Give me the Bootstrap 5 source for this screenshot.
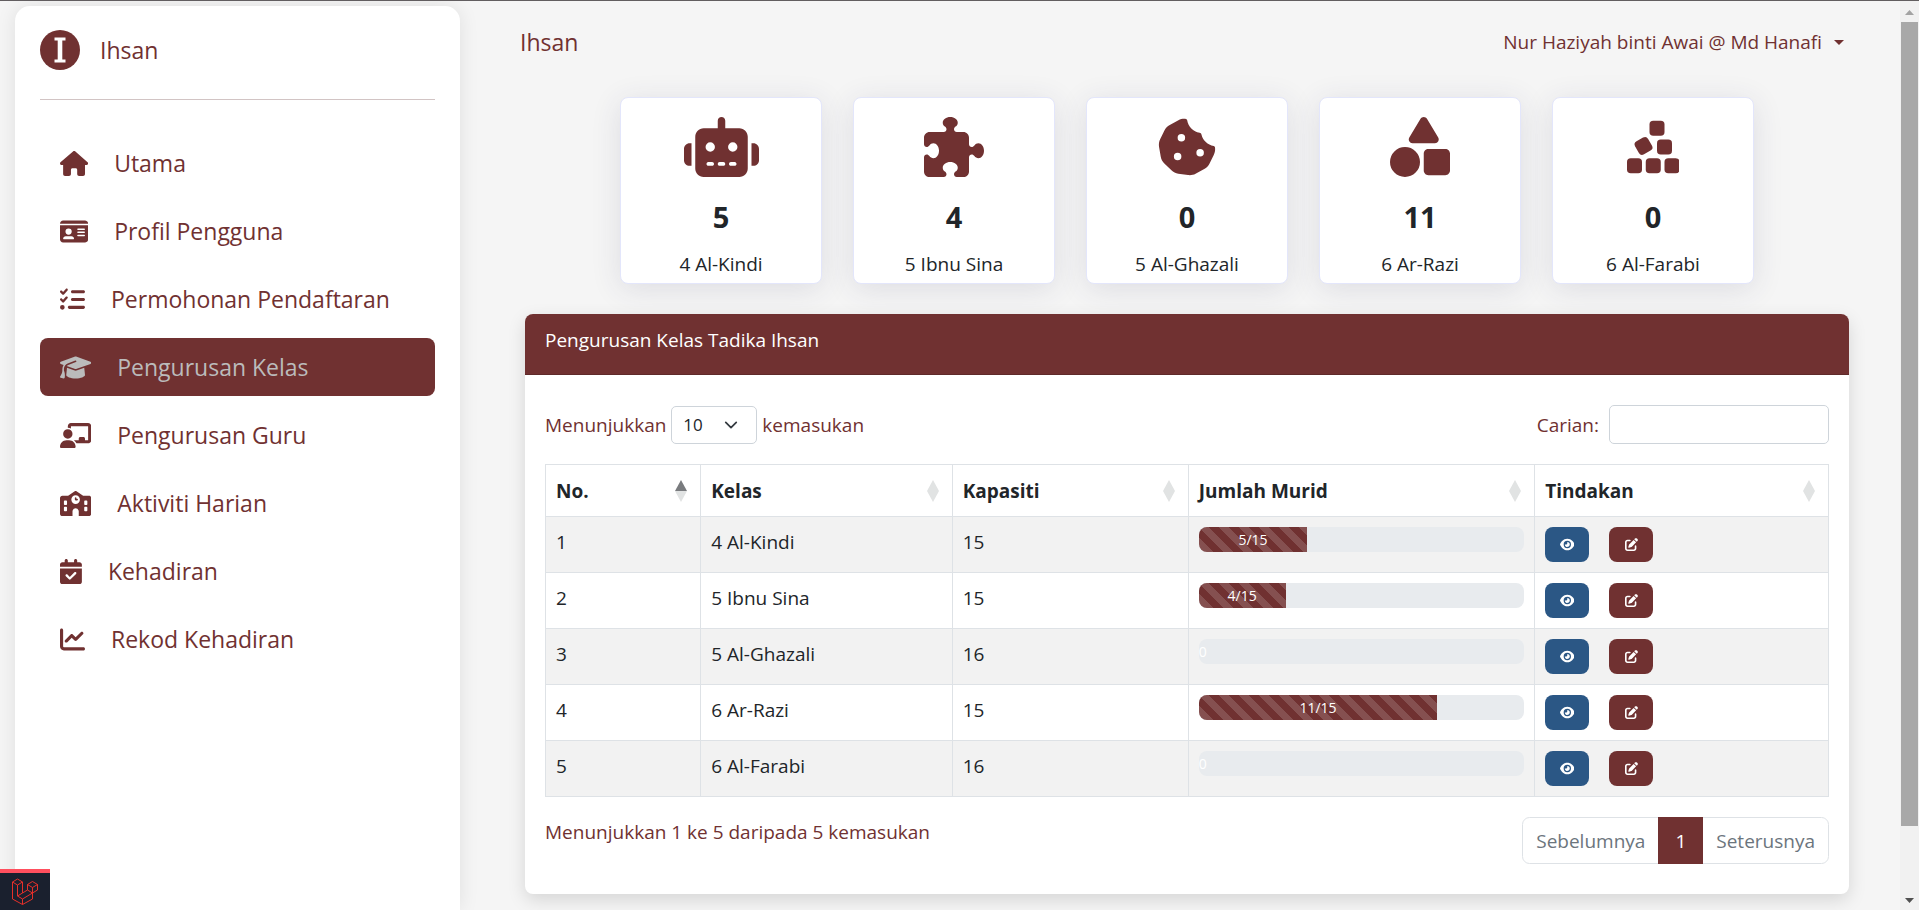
<!DOCTYPE html>
<html lang="ms">
<head>
<meta charset="utf-8">
<meta name="viewport" content="width=device-width, initial-scale=1">
<title>Pengurusan Kelas</title>
<link href="https://cdn.jsdelivr.net/npm/bootstrap@5.3.0/dist/css/bootstrap.min.css" rel="stylesheet">
<style>
:root { --brand: #703131; }
html { font-size: 20px; }
body { font-family: "Open Sans", "Noto Sans", sans-serif; font-size: 19px; line-height: 30px; background: #f5f5f5; color: #212529; border-top: 1px solid #625e60; height: 100vh; overflow: hidden; }
.ico { height: 1em; width: auto; fill: currentColor; display: block; flex: none; }
.text-brand, .text-brand:hover { color: var(--brand); }

/* sidebar */
.side { flex: 0 0 460px; padding: 5px 0 0 15px; }
.side-panel { background: #fff; border-radius: 15px 15px 0 0; padding: 24px 25px; box-shadow: 0 0 20px rgba(0,0,0,.09); }
.brand-name, .page-name { font-size: 23px; line-height: 38px; }
.side-line { border-top: 1px solid #d2c4c4; margin: 29px 0 34px; }
.side-nav { gap: 10px; }
.side-nav .nav-link { display: flex; align-items: center; gap: 26px; font-size: 23px; line-height: 38px; padding: 10px 20px; color: var(--brand); border-radius: 8px; }
.side-nav .nav-link .ico { height: 25px; }
.side-nav .nav-link.active { background: var(--brand); color: #bbb; }

/* content */
.content-area { padding: 0 51px 0 65px; }
.topbar { padding: 22px 5px 0 0; margin-left: -5px; }
.user-btn { background: none; border: 0; padding: 0; }
.user-btn::after { margin-left: 12px; vertical-align: 4px; }
.stats { gap: 31px; margin: 36px 0 30px; }
.stat { flex: 0 0 202px; background: #fff; border: 1px solid #e3e6fb; border-radius: 8px; padding: 19px 0 4px; box-shadow: 0 5px 30px rgba(50,50,90,.12); }
.stat .ico { height: 60px; margin: 0 auto 21px; color: var(--brand); }
.stat-num { font-size: 29px; font-weight: 700; line-height: 38px; margin-bottom: 13px; }
.panel { background: #fff; border-radius: 8px; box-shadow: 0 6px 18px rgba(0,0,0,.13); overflow: hidden; }
.panel-head { background: var(--brand); color: #fff; padding: 11px 20px 19px; border-bottom: 1px solid #5f2a2a; }
.panel-inner { padding: 30px 20px; }
.len-select { width: 86px; height: 38px; font-size: 17px; padding: 0 0 0 11px; border-color: #ced4da; border-radius: 5px; background-position: right 17px center; background-size: 16px 14px; }
.find-input { width: 220px; height: 39px; border-color: #ced4da; border-radius: 5px; }
.grid-table { margin: 20px 0; table-layout: fixed; color: #212529; }
.grid-table > :not(caption) > * > * { padding: 10px; }
.grid-table > thead > tr > th { padding-top: 11px; }
.sort { display: block; width: 12px; height: 22px; margin-right: 3px; }
.bar { height: 25px; border-radius: 8px; background: #e8ebee; font-size: 14px; }
.bar .progress-bar { background-color: var(--brand); overflow: visible; }
.act-set { gap: 20px; }
.act { display: flex; align-items: center; justify-content: center; border: 0; color: #fff; padding: 0; width: 44px; height: 35px; border-radius: 8px; font-size: 13px; }
.act-view { background: #2b5785; }
.act-edit { background: var(--brand); }
.pager .page-link { font-size: 19px; line-height: 30px; padding: 8px 13px; color: #6c757d; border-color: #dee2e6; height: 47px; }
.pager .active .page-link { background: var(--brand); border-color: var(--brand); color: #fff; padding: 8px 16px; }

/* window scrollbar and developer badge */
.vbar { flex: 0 0 19px; background: #f1f1f1; padding: 0 1px; }
.vbar-thumb { flex: 0 1 804px; background: #a8a8a8; }
.vbar svg { display: block; width: 100%; height: 21px; }
.dev-badge { position: fixed; left: 0; bottom: 0; width: 50px; height: 41px; border-top: 4px solid #ff4f5e; background: #1a202e; }
</style>
</head>
<body class="d-flex">
<svg class="d-none" xmlns="http://www.w3.org/2000/svg">
  <symbol id="eye" viewBox="0 0 576 512"><path d="M288 32c-80.8 0-145.5 36.8-192.6 80.6C48.6 156 17.3 208 2.5 243.7c-3.3 7.9-3.3 16.7 0 24.6C17.3 304 48.6 356 95.4 399.4C142.5 443.2 207.2 480 288 480s145.5-36.8 192.6-80.6c46.8-43.5 78.1-95.4 93-131.1c3.3-7.9 3.3-16.7 0-24.6c-14.9-35.7-46.2-87.7-93-131.1C433.5 68.8 368.8 32 288 32zM144 256a144 144 0 1 1 288 0 144 144 0 1 1 -288 0zm144-64c0 35.3-28.7 64-64 64c-7.1 0-13.9-1.2-20.3-3.3c-5.5-1.8-11.9 1.6-11.7 7.4c.3 6.9 1.3 13.8 3.2 20.7c13.7 51.2 66.4 81.6 117.6 67.9s81.6-66.4 67.9-117.6c-11.1-41.5-47.8-69.4-88.6-71.1c-5.8-.2-9.2 6.1-7.4 11.7c2.1 6.4 3.3 13.2 3.3 20.3z"/></symbol>
  <symbol id="edit" viewBox="0 0 512 512"><path d="M471.6 21.7c-21.9-21.9-57.3-21.9-79.2 0L362.3 51.7l97.9 97.9 30.1-30.1c21.9-21.9 21.9-57.3 0-79.2L471.6 21.7zm-299.2 220c-6.1 6.1-10.8 13.6-13.5 21.9l-29.6 88.8c-2.9 8.6-.6 18.1 5.8 24.6s15.9 8.7 24.6 5.8l88.8-29.6c8.2-2.7 15.7-7.4 21.9-13.5L437.7 172.3 339.7 74.3 172.4 241.7zM96 64C43 64 0 107 0 160V416c0 53 43 96 96 96H352c53 0 96-43 96-96V320c0-17.7-14.3-32-32-32s-32 14.3-32 32v96c0 17.7-14.3 32-32 32H96c-17.7 0-32-14.3-32-32V160c0-17.7 14.3-32 32-32h96c17.7 0 32-14.3 32-32s-14.3-32-32-32H96z"/></symbol>
  <symbol id="sort" viewBox="0 0 12 22"><path d="M6 0l6 11H0z"/><path d="M6 22l6-11H0z"/></symbol>
</svg>

<aside class="side d-flex">
  <div class="side-panel flex-fill">
    <a href="#" class="d-flex align-items-center text-decoration-none text-brand">
      <svg width="40" height="40" viewBox="0 0 40 40"><circle cx="20" cy="20" r="20" fill="#703131"/><path d="M14.500 7.500h11v3h-3.200v19h3.200v3h-11v-3h3.200v-19h-3.200z" fill="#fff"/></svg>
      <span class="brand-name ms-3">Ihsan</span>
    </a>
    <div class="side-line"></div>
    <nav class="nav flex-column side-nav">
      <a class="nav-link" href="#"><svg class="ico" viewBox="0 0 576 512"><path d="M575.8 255.5c0 18-15 32.1-32 32.1h-32l.7 160.2c0 2.700-.2 5.400-.5 8.100V472c0 22.100-17.900 40-40 40H456c-1.100 0-2.200 0-3.300-.1c-1.400 .1-2.800 .1-4.200 .1H416 392c-22.100 0-40-17.900-40-40V448 384c0-17.700-14.300-32-32-32H256c-17.700 0-32 14.300-32 32v64 24c0 22.100-17.900 40-40 40H160 128.100c-1.500 0-3-.1-4.500-.2c-1.200 .1-2.400 .2-3.600 .2H104c-22.100 0-40-17.900-40-40V360c0-.9 0-1.900 .1-2.800V287.600H32c-18 0-32-14-32-32.100c0-9 3-17 10-24L266.400 8c7-7 15-8 22-8s15 2 21 7L564.800 231.500c8 7 12 15 11 24z"/></svg>Utama</a>
      <a class="nav-link" href="#"><svg class="ico" viewBox="0 0 576 512"><path d="M0 96l576 0c0-35.3-28.7-64-64-64H64C28.7 32 0 60.7 0 96zm0 32V416c0 35.3 28.7 64 64 64H512c35.3 0 64-28.7 64-64V128H0zM64 405.3c0-29.5 23.9-53.3 53.3-53.3H234.7c29.5 0 53.3 23.9 53.3 53.3c0 5.900-4.800 10.700-10.700 10.700H74.7c-5.900 0-10.700-4.800-10.700-10.700zM176 192a64 64 0 1 1 0 128 64 64 0 1 1 0-128zm176 16c0-8.800 7.200-16 16-16H496c8.800 0 16 7.200 16 16s-7.200 16-16 16H368c-8.800 0-16-7.200-16-16zm0 64c0-8.800 7.200-16 16-16H496c8.800 0 16 7.200 16 16s-7.200 16-16 16H368c-8.800 0-16-7.200-16-16zm0 64c0-8.800 7.200-16 16-16H496c8.800 0 16 7.200 16 16s-7.200 16-16 16H368c-8.800 0-16-7.200-16-16z"/></svg>Profil Pengguna</a>
      <a class="nav-link" href="#"><svg class="ico" viewBox="0 0 512 512"><path d="M152.1 38.2c9.900 8.900 10.700 24 1.800 33.900l-72 80c-4.400 4.900-10.600 7.800-17.200 7.900s-12.900-2.400-17.600-7L7 113C-2.300 103.600-2.300 88.400 7 79s24.600-9.400 33.900 0l22.100 22.100 55.100-61.200c8.900-9.900 24-10.700 33.900-1.800zm0 160c9.900 8.900 10.700 24 1.800 33.900l-72 80c-4.400 4.900-10.600 7.800-17.200 7.900s-12.900-2.400-17.600-7L7 273c-9.400-9.400-9.400-24.600 0-33.900s24.600-9.400 33.900 0l22.100 22.100 55.100-61.200c8.900-9.900 24-10.700 33.900-1.800zM224 96c0-17.700 14.300-32 32-32H480c17.700 0 32 14.300 32 32s-14.300 32-32 32H256c-17.700 0-32-14.300-32-32zm0 160c0-17.700 14.300-32 32-32H480c17.700 0 32 14.300 32 32s-14.300 32-32 32H256c-17.700 0-32-14.300-32-32zM160 416c0-17.700 14.300-32 32-32H480c17.700 0 32 14.300 32 32s-14.300 32-32 32H192c-17.700 0-32-14.300-32-32zM48 368a48 48 0 1 1 0 96 48 48 0 1 1 0-96z"/></svg>Permohonan Pendaftaran</a>
      <a class="nav-link active" aria-current="page" href="#"><svg class="ico" viewBox="0 0 640 512"><path d="M320 32c-8.100 0-16.100 1.400-23.700 4.100L15.800 137.400C6.300 140.900 0 149.900 0 160s6.300 19.100 15.800 22.600l57.900 20.900C57.300 229.300 48 259.800 48 291.900v28.100c0 28.400-10.800 57.700-22.300 80.800c-6.500 13-13.900 25.800-22.500 37.600C0 442.700-.9 448.300 .9 453.400s6 8.900 11.200 10.200l64 16c4.200 1.100 8.700 .3 12.400-2s6.300-6.100 7.100-10.400c8.600-42.800 4.300-81.200-2.100-108.700C90.300 344.300 86 329.800 80 316.500V291.900c0-30.200 10.200-58.700 27.900-81.500c12.900-15.500 29.600-28 49.200-35.700l157-61.700c8.200-3.200 17.500 .8 20.700 9s-.8 17.500-9 20.700l-157 61.700c-12.400 4.900-23.300 12.400-32.200 21.600l159.600 57.600c7.600 2.700 15.600 4.100 23.700 4.100s16.100-1.400 23.700-4.100L624.200 182.600c9.500-3.400 15.800-12.500 15.800-22.600s-6.300-19.100-15.800-22.600L343.700 36.100C336.100 33.400 328.100 32 320 32zM128 408c0 35.300 86 72 192 72s192-36.700 192-72L496.700 262.600 354.500 314c-11.100 4-22.800 6-34.500 6s-23.500-2-34.500-6L143.300 262.600 128 408z"/></svg>Pengurusan Kelas</a>
      <a class="nav-link" href="#"><svg class="ico" viewBox="0 0 640 512"><path d="M160 64c0-35.300 28.700-64 64-64H576c35.300 0 64 28.700 64 64V352c0 35.300-28.700 64-64 64H336.800c-11.800-25.500-29.900-47.500-52.400-64H384V320c0-17.700 14.300-32 32-32h64c17.700 0 32 14.300 32 32v32h64V64L224 64v49.100C205.200 102.200 183.300 96 160 96V64zm0 64a96 96 0 1 1 0 192 96 96 0 1 1 0-192zM133.300 352h53.300C260.300 352 320 411.700 320 485.300c0 14.700-11.900 26.700-26.700 26.700H26.700C11.900 512 0 500.100 0 485.300C0 411.700 59.700 352 133.300 352z"/></svg>Pengurusan Guru</a>
      <a class="nav-link" href="#"><svg class="ico" viewBox="0 0 640 512"><path d="M337.800 5.400C327-1.800 313-1.800 302.200 5.400L166.300 96H48C21.500 96 0 117.500 0 144V464c0 26.500 21.500 48 48 48H256V416c0-35.300 28.700-64 64-64s64 28.700 64 64v96H592c26.500 0 48-21.500 48-48V144c0-26.500-21.500-48-48-48H473.700L337.800 5.400zM96 192h32c8.800 0 16 7.200 16 16v64c0 8.800-7.200 16-16 16H96c-8.800 0-16-7.200-16-16V208c0-8.800 7.200-16 16-16zm400 16c0-8.800 7.200-16 16-16h32c8.800 0 16 7.200 16 16v64c0 8.800-7.200 16-16 16H512c-8.800 0-16-7.200-16-16V208zM96 320h32c8.800 0 16 7.200 16 16v64c0 8.800-7.200 16-16 16H96c-8.800 0-16-7.200-16-16V336c0-8.800 7.200-16 16-16zm400 16c0-8.800 7.200-16 16-16h32c8.800 0 16 7.200 16 16v64c0 8.800-7.200 16-16 16H512c-8.800 0-16-7.200-16-16V336zM232 176a88 88 0 1 1 176 0 88 88 0 1 1 -176 0zm88-48c-8.800 0-16 7.200-16 16v32c0 8.800 7.200 16 16 16h32c8.800 0 16-7.200 16-16s-7.200-16-16-16H336V144c0-8.800-7.200-16-16-16z"/></svg>Aktiviti Harian</a>
      <a class="nav-link" href="#"><svg class="ico" viewBox="0 0 448 512"><path d="M128 0c17.700 0 32 14.300 32 32V64H288V32c0-17.700 14.300-32 32-32s32 14.300 32 32V64h48c26.500 0 48 21.500 48 48v48H0V112C0 85.500 21.500 64 48 64H96V32c0-17.700 14.300-32 32-32zM0 192H448V464c0 26.500-21.500 48-48 48H48c-26.500 0-48-21.500-48-48V192zM329 305c9.400-9.400 9.400-24.600 0-33.900s-24.600-9.400-33.900 0l-95 95-47-47c-9.400-9.400-24.600-9.400-33.900 0s-9.400 24.600 0 33.900l64 64c9.400 9.400 24.600 9.400 33.900 0L329 305z"/></svg>Kehadiran</a>
      <a class="nav-link" href="#"><svg class="ico" viewBox="0 0 512 512"><path d="M64 64c0-17.700-14.300-32-32-32S0 46.300 0 64V400c0 44.200 35.800 80 80 80H480c17.700 0 32-14.300 32-32s-14.300-32-32-32H80c-8.800 0-16-7.200-16-16V64zm406.600 86.600c12.500-12.500 12.500-32.800 0-45.300s-32.800-12.500-45.300 0L320 210.700l-57.400-57.400c-12.500-12.500-32.800-12.500-45.300 0l-112 112c-12.500 12.500-12.500 32.800 0 45.300s32.800 12.500 45.300 0L240 221.300l57.400 57.400c12.500 12.500 32.800 12.500 45.300 0l128-128z"/></svg>Rekod Kehadiran</a>
    </nav>
  </div>
</aside>

<main class="content-area flex-fill">
  <header class="topbar d-flex justify-content-between align-items-center">
    <div class="page-name text-brand">Ihsan</div>
    <button class="user-btn dropdown-toggle text-brand" type="button" data-bs-toggle="dropdown">Nur Haziyah binti Awai @ Md Hanafi</button>
  </header>

  <section class="stats d-flex justify-content-center text-center">
    <div class="stat"><svg class="ico" viewBox="0 0 640 512"><path d="M320 0c17.700 0 32 14.300 32 32V96H472c39.800 0 72 32.200 72 72V440c0 39.800-32.200 72-72 72H168c-39.800 0-72-32.200-72-72V168c0-39.800 32.200-72 72-72H288V32c0-17.700 14.300-32 32-32zM208 384c-8.800 0-16 7.200-16 16s7.200 16 16 16h32c8.800 0 16-7.200 16-16s-7.200-16-16-16H208zm96 0c-8.800 0-16 7.200-16 16s7.200 16 16 16h32c8.800 0 16-7.200 16-16s-7.200-16-16-16H304zm96 0c-8.800 0-16 7.200-16 16s7.200 16 16 16h32c8.800 0 16-7.200 16-16s-7.200-16-16-16H400zM264 256a40 40 0 1 0 -80 0 40 40 0 1 0 80 0zm152 40a40 40 0 1 0 0-80 40 40 0 1 0 0 80zM48 224H64V416H48c-26.500 0-48-21.500-48-48V272c0-26.500 21.500-48 48-48zm544 0c26.500 0 48 21.500 48 48v96c0 26.500-21.500 48-48 48H576V224h16z"/></svg><div class="stat-num">5</div>4 Al-Kindi</div>
    <div class="stat"><svg class="ico" viewBox="0 0 512 512"><path d="M192 104.800c0-9.200-5.800-17.300-13.200-22.800C167.200 73.300 160 61.300 160 48c0-26.500 28.700-48 64-48s64 21.500 64 48c0 13.300-7.200 25.300-18.800 34c-7.400 5.500-13.200 13.600-13.200 22.800v0c0 12.800 10.400 23.200 23.200 23.200H336c26.500 0 48 21.500 48 48v56.800c0 12.800 10.400 23.200 23.200 23.200v0c9.200 0 17.300-5.800 22.800-13.200c8.700-11.600 20.700-18.800 34-18.800c26.500 0 48 28.700 48 64s-21.500 64-48 64c-13.300 0-25.300-7.200-34-18.800c-5.500-7.400-13.600-13.200-22.800-13.200v0c-12.800 0-23.200 10.400-23.200 23.200V464c0 26.500-21.500 48-48 48H279.200c-12.800 0-23.200-10.400-23.200-23.200v0c0-9.200 5.800-17.300 13.200-22.800c11.600-8.700 18.800-20.700 18.800-34c0-26.500-28.700-48-64-48s-64 21.500-64 48c0 13.300 7.200 25.300 18.800 34c7.400 5.500 13.200 13.600 13.200 22.800v0c0 12.800-10.400 23.200-23.200 23.200H48c-26.500 0-48-21.500-48-48V343.200C0 330.400 10.400 320 23.200 320v0c9.200 0 17.300 5.800 22.800 13.200C54.700 344.800 66.700 352 80 352c26.500 0 48-28.700 48-64s-21.500-64-48-64c-13.300 0-25.300 7.200-34 18.800C40.500 250.200 32.400 256 23.200 256v0C10.400 256 0 245.600 0 232.800V176c0-26.500 21.500-48 48-48H168.800c12.800 0 23.200-10.400 23.200-23.200v0z"/></svg><div class="stat-num">4</div>5 Ibnu Sina</div>
    <div class="stat"><svg class="ico" viewBox="0 0 512 512"><path d="M257.500 27.600c-.8-5.400-4.900-9.800-10.300-10.600c-22.100-3.100-44.600 .9-64.400 11.400l-74 39.500C89.100 78.400 73.200 94.900 63.400 115L26.700 190.600c-9.800 20.100-13 42.900-9.100 64.900l14.500 82.800c3.900 22.100 14.600 42.300 30.700 57.900l60.300 58.400c16.100 15.600 36.600 25.600 58.700 28.700l83 11.700c22.100 3.100 44.600-.9 64.400-11.400l74-39.500c19.700-10.500 35.600-27 45.400-47.200l36.700-75.500c9.800-20.100 13-42.900 9.100-64.900c-.9-5.300-5.300-9.300-10.600-10.100c-51.500-8.200-92.800-47.100-104.500-97.400c-1.800-7.600-8-13.400-15.700-14.600c-54.600-8.700-97.700-52-106.200-106.800zM208 144a32 32 0 1 1 0 64 32 32 0 1 1 0-64zM144 336a32 32 0 1 1 64 0 32 32 0 1 1 -64 0zm224-64a32 32 0 1 1 0 64 32 32 0 1 1 0-64z"/></svg><div class="stat-num">0</div>5 Al-Ghazali</div>
    <div class="stat"><svg class="ico" viewBox="0 0 512 512"><path d="M315.400 15.500C309.700 5.900 299.200 0 288 0s-21.700 5.900-27.400 15.500l-96 160c-5.900 9.900-6.100 22.200-.4 32.200s16.300 16.200 27.800 16.200H384c11.500 0 22.200-6.200 27.800-16.200s5.500-22.300-.4-32.200l-96-160zM288 312V456c0 22.100 17.900 40 40 40H472c22.100 0 40-17.900 40-40V312c0-22.100-17.900-40-40-40H328c-22.100 0-40 17.900-40 40zM128 512a128 128 0 1 0 0-256 128 128 0 1 0 0 256z"/></svg><div class="stat-num">11</div>6 Ar-Razi</div>
    <div class="stat"><svg class="ico" viewBox="0 0 448 512"><g><rect x="192" y="32" width="128" height="128" rx="32"/><rect x="256" y="192" width="128" height="128" rx="32"/><rect x="77" y="183" width="128" height="128" rx="32" transform="rotate(-30 141 247)"/><rect x="0" y="352" width="128" height="128" rx="32"/><rect x="160" y="352" width="128" height="128" rx="32"/><rect x="320" y="352" width="128" height="128" rx="32"/></g></svg><div class="stat-num">0</div>6 Al-Farabi</div>
  </section>

  <section class="panel">
    <div class="panel-head">Pengurusan Kelas Tadika Ihsan</div>
    <div class="panel-inner">
      <div class="d-flex justify-content-between align-items-center text-brand">
        <label class="d-flex align-items-center gap-1">Menunjukkan
          <select class="form-select len-select"><option>10</option><option>25</option><option>50</option></select>
          kemasukan</label>
        <label class="d-flex align-items-center gap-2">Carian: <input type="search" class="form-control find-input"></label>
      </div>
      <table class="table table-bordered table-striped grid-table">
        <colgroup><col style="width:12.1%"><col style="width:19.6%"><col style="width:18.4%"><col style="width:27%"><col style="width:22.9%"></colgroup>
        <thead>
          <tr>
            <th><div class="d-flex justify-content-between align-items-center">No.<svg class="sort" viewBox="0 0 12 22"><path d="M6 0l6 11H0z" fill="#797b7e"/><path d="M6 22l6-11H0z" fill="#e1e3e3"/></svg></div></th>
            <th><div class="d-flex justify-content-between align-items-center">Kelas<svg class="sort" fill="#e1e3e3"><use href="#sort"/></svg></div></th>
            <th><div class="d-flex justify-content-between align-items-center">Kapasiti<svg class="sort" fill="#e1e3e3"><use href="#sort"/></svg></div></th>
            <th><div class="d-flex justify-content-between align-items-center">Jumlah Murid<svg class="sort" fill="#e1e3e3"><use href="#sort"/></svg></div></th>
            <th><div class="d-flex justify-content-between align-items-center">Tindakan<svg class="sort" fill="#e1e3e3"><use href="#sort"/></svg></div></th>
          </tr>
        </thead>
        <tbody>
          <tr><td>1</td><td>4 Al-Kindi</td><td>15</td>
            <td><div class="progress bar"><div class="progress-bar progress-bar-striped" style="width:33.33%">5/15</div></div></td>
            <td><div class="d-flex act-set"><button class="act act-view" aria-label="Lihat"><svg class="ico" viewBox="0 0 576 512"><use href="#eye"/></svg></button><button class="act act-edit" aria-label="Sunting"><svg class="ico" viewBox="0 0 512 512"><use href="#edit"/></svg></button></div></td></tr>
          <tr><td>2</td><td>5 Ibnu Sina</td><td>15</td>
            <td><div class="progress bar"><div class="progress-bar progress-bar-striped" style="width:26.67%">4/15</div></div></td>
            <td><div class="d-flex act-set"><button class="act act-view" aria-label="Lihat"><svg class="ico" viewBox="0 0 576 512"><use href="#eye"/></svg></button><button class="act act-edit" aria-label="Sunting"><svg class="ico" viewBox="0 0 512 512"><use href="#edit"/></svg></button></div></td></tr>
          <tr><td>3</td><td>5 Al-Ghazali</td><td>16</td>
            <td><div class="progress bar"><div class="progress-bar" style="width:0%">0</div></div></td>
            <td><div class="d-flex act-set"><button class="act act-view" aria-label="Lihat"><svg class="ico" viewBox="0 0 576 512"><use href="#eye"/></svg></button><button class="act act-edit" aria-label="Sunting"><svg class="ico" viewBox="0 0 512 512"><use href="#edit"/></svg></button></div></td></tr>
          <tr><td>4</td><td>6 Ar-Razi</td><td>15</td>
            <td><div class="progress bar"><div class="progress-bar progress-bar-striped" style="width:73.33%">11/15</div></div></td>
            <td><div class="d-flex act-set"><button class="act act-view" aria-label="Lihat"><svg class="ico" viewBox="0 0 576 512"><use href="#eye"/></svg></button><button class="act act-edit" aria-label="Sunting"><svg class="ico" viewBox="0 0 512 512"><use href="#edit"/></svg></button></div></td></tr>
          <tr><td>5</td><td>6 Al-Farabi</td><td>16</td>
            <td><div class="progress bar"><div class="progress-bar" style="width:0%">0</div></div></td>
            <td><div class="d-flex act-set"><button class="act act-view" aria-label="Lihat"><svg class="ico" viewBox="0 0 576 512"><use href="#eye"/></svg></button><button class="act act-edit" aria-label="Sunting"><svg class="ico" viewBox="0 0 512 512"><use href="#edit"/></svg></button></div></td></tr>
        </tbody>
      </table>
      <div class="d-flex justify-content-between">
        <div class="text-brand">Menunjukkan 1 ke 5 daripada 5 kemasukan</div>
        <ul class="pagination pager mb-0">
          <li class="page-item"><a class="page-link" href="#">Sebelumnya</a></li>
          <li class="page-item active"><a class="page-link" href="#">1</a></li>
          <li class="page-item"><a class="page-link" href="#">Seterusnya</a></li>
        </ul>
      </div>
    </div>
  </section>
</main>

<div class="vbar d-flex flex-column" aria-hidden="true">
  <svg viewBox="0 0 17 21"><path d="M4 14h9L8.500 9z" fill="#a3a3a3"/></svg>
  <div class="vbar-thumb"></div>
  <svg class="mt-auto" viewBox="0 0 17 21"><path d="M4 9h9l-4.500 5z" fill="#505050"/></svg>
</div>

<div class="dev-badge d-flex justify-content-center align-items-center">
  <svg width="28" height="28" viewBox="0 0 28 28" fill="none" stroke="#e5302a" stroke-width="1" stroke-linejoin="round"><path d="M1.500 4l5-3 5 3-5 3zM1.500 4v17l10 5.500 10-5.500v-6M6.500 7v11l5 3 10-6M11.500 4v11l-5 3M11.500 21v5.500M16.500 6.500l5-3 5 3-5 3zM16.500 6.500v5.500l5 3 5-3V6.500M21.500 9.500V15M11.500 15l5-3"/></svg>
</div>
<script src="https://cdn.jsdelivr.net/npm/bootstrap@5.3.0/dist/js/bootstrap.bundle.min.js"></script>
</body>
</html>
